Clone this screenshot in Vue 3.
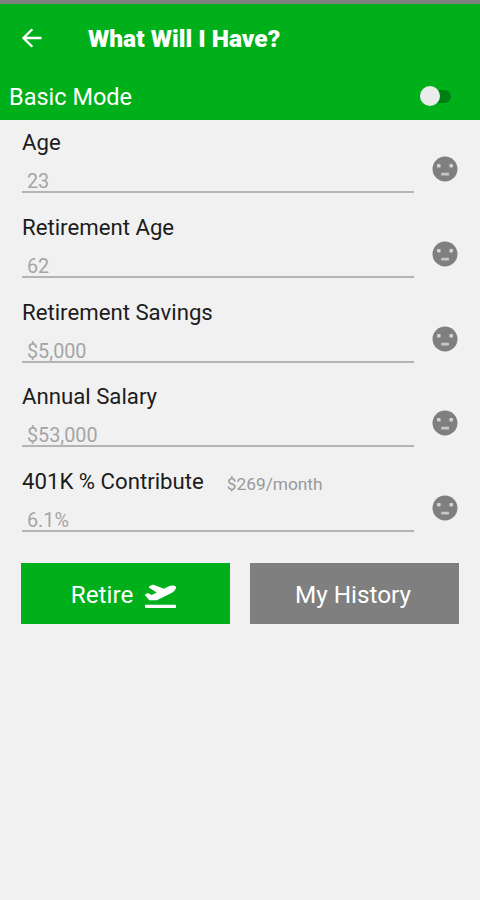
<script setup>
const fields = [
  { label: 'Age', value: '23' },
  { label: 'Retirement Age', value: '62' },
  { label: 'Retirement Savings', value: '$5,000' },
  { label: 'Annual Salary', value: '$53,000' },
  { label: '401K % Contribute', value: '6.1%', note: '$269/month' },
]
</script>

<template>
  <div class="screen">
    <header class="header">
      <div class="bar">
        <svg class="back" viewBox="0 0 20 20">
          <path d="M19.5 10H1.8M10.3 1.2L1.5 10l8.8 8.8" fill="none" stroke="#fff" stroke-width="2.3" />
        </svg>
        <h1 class="title">What Will I Have?</h1>
      </div>
      <div class="mode">
        <span class="mode-label">Basic Mode</span>
        <span class="switch"><span class="track"></span><span class="thumb"></span></span>
      </div>
    </header>
    <main class="content">
      <div v-for="field in fields" :key="field.label" class="field">
        <div class="entry">
          <div class="heading">
            <span class="label">{{ field.label }}</span>
            <span v-if="field.note" class="note">{{ field.note }}</span>
          </div>
          <div class="value">{{ field.value }}</div>
        </div>
        <svg class="face" viewBox="0 0 26 26">
          <circle cx="13" cy="13" r="12.5" fill="#7f7f7f" />
          <rect x="5" y="8" width="3.6" height="3.4" rx="1" fill="#d4d4d4" />
          <rect x="17.4" y="8" width="3.6" height="3.4" rx="1" fill="#d4d4d4" />
          <rect x="9.2" y="16.7" width="7.8" height="2.8" rx="0.6" fill="#c8c8c8" />
        </svg>
      </div>
      <div class="actions">
        <button class="button retire">
          <span>Retire</span>
          <svg class="plane" viewBox="0 0 640 512">
            <path fill="#fff" d="M624 448H16c-8.84 0-16 7.16-16 16v32c0 8.84 7.16 16 16 16h608c8.84 0 16-7.16 16-16v-32c0-8.84-7.16-16-16-16zM80.55 341.27c6.28 6.84 15.1 10.72 24.33 10.71l130.54-.18a65.62 65.62 0 0 0 29.64-7.12l290.96-147.65c26.74-13.57 50.71-32.94 67.02-58.31 18.31-28.48 20.3-49.09 13.07-63.65-7.21-14.57-24.74-25.27-58.25-27.45-29.85-1.94-59.54 5.92-86.28 19.48l-98.51 49.99-218.7-82.06a17.799 17.799 0 0 0-18-1.11L90.62 67.29c-10.67 5.41-13.25 19.65-5.17 28.53l156.22 98.1-103.21 52.38-72.35-36.47a17.804 17.804 0 0 0-16.07.02L9.91 230.22c-10.44 5.3-13.19 19.12-5.57 28.08l76.21 82.97z" />
          </svg>
        </button>
        <button class="button history">My History</button>
      </div>
    </main>
  </div>
</template>

<style>
body {
  background: #f1f1f1;
}
</style>

<style scoped>
.screen {
  height: 900px;
  box-sizing: border-box;
  border-top: 4px solid #7f7f7f;
  background: #f1f1f1;
  font-family: Roboto, sans-serif;
  color: #1c1c1c;
}
.header {
  height: 116.2px;
  background: #00b01a;
  color: #fff;
}
.bar {
  height: 69px;
  display: flex;
  align-items: center;
  padding-left: 22px;
  gap: 46px;
}
.back {
  width: 20px;
  height: 20px;
  margin-top: -2px;
}
.title {
  margin: 0;
  font-size: 24.5px;
  font-weight: 900;
  line-height: 30px;
}
.mode {
  height: 47px;
  display: flex;
  align-items: center;
  justify-content: space-between;
  padding: 0 29px 0 9px;
}
.mode-label {
  font-size: 23.5px;
  line-height: 30px;
}
.switch {
  width: 31px;
  height: 20px;
  display: grid;
  align-items: center;
  margin-top: -1px;
}
.track,
.thumb {
  grid-area: 1 / 1;
}
.track {
  justify-self: end;
  width: 24px;
  height: 13px;
  border-radius: 6.5px;
  background: #008013;
}
.thumb {
  width: 20px;
  height: 20px;
  border-radius: 50%;
  background: #ececec;
}
.content {
  padding: 0 21px;
}
.field {
  height: 84.75px;
  display: flex;
  justify-content: space-between;
}
.entry {
  width: 392px;
  margin-left: 1px;
}
.heading {
  height: 30px;
  padding-top: 7px;
  display: flex;
  gap: 23px;
  line-height: 30px;
}
.label {
  font-size: 22.2px;
}
.note {
  font-size: 17.3px;
  line-height: 36px;
  color: #999;
}
.value {
  height: 34px;
  border-bottom: 2px solid #b4b4b4;
  padding: 0 0 0 5px;
  line-height: 50px;
  font-size: 19.8px;
  color: #a5a5a5;
}
.face {
  width: 26px;
  height: 26px;
  margin: 36px 1px 0 0;
}
.actions {
  display: grid;
  grid-template-columns: 1fr 1fr;
  gap: 20px;
  padding-top: 18.6px;
}
.button {
  height: 61px;
  border: 0;
  padding: 3px 0 0;
  display: flex;
  align-items: center;
  justify-content: center;
  gap: 12px;
  font: 24.3px Roboto, sans-serif;
  color: #fff;
}
.retire {
  background: #00b01a;
  padding-right: 4px;
}
.history {
  background: #7f7f7f;
  padding-right: 3px;
}
.plane {
  width: 31px;
  height: 25px;
  margin-top: 1px;
}
</style>
